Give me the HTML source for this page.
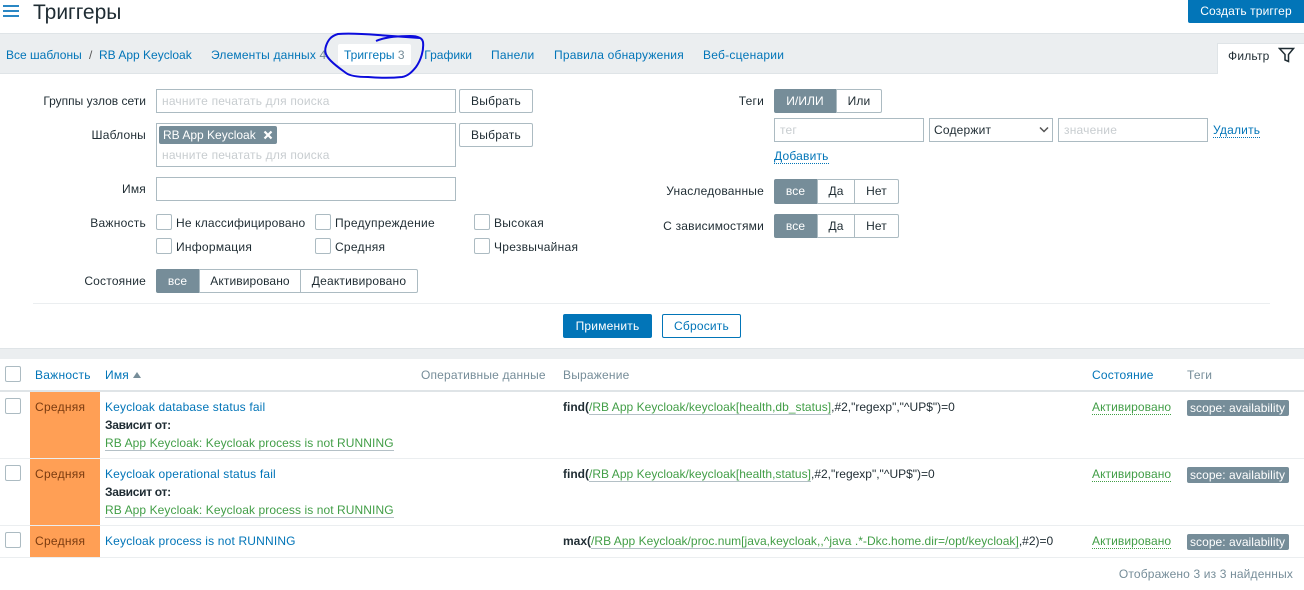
<!DOCTYPE html>
<html lang="ru"><head><meta charset="utf-8"><title>Триггеры</title>
<style>
html,body{margin:0;padding:0;background:#fff}
body{width:1304px;height:590px;overflow:hidden;position:relative;font:12px/14px "Liberation Sans",Arial,sans-serif;color:#1f2c33;letter-spacing:.2px}
.t{position:absolute;white-space:nowrap;line-height:14px}
.r{text-align:right}
.c{text-align:center}
.b{color:#0275b8}
.g{color:#429e47}
.m{color:#768d99}
.ph{color:#c8cdd0}
.l0{letter-spacing:0}
.ln17{letter-spacing:.17px}
.dep{letter-spacing:.08px}
.exp{letter-spacing:0}
.exp .g{letter-spacing:.03px}
.ck{letter-spacing:.27px}
.box{position:absolute;box-sizing:border-box;border:1px solid #acbbc2;background:#fff}
.btn{position:absolute;box-sizing:border-box;border:1px solid #acbbc2;background:#fff;border-radius:2px;text-align:center;line-height:22px}
.seg{position:absolute;box-sizing:border-box;border:1px solid #acbbc2;background:#fff;text-align:center;line-height:22px;margin:0;letter-spacing:.1px}
.on{background:#768d99;border-color:#768d99;color:#fff}
.cb{position:absolute;box-sizing:border-box;width:16px;height:16px;border:1px solid #acbbc2;border-radius:2px;background:#fff}
.f{position:absolute;background:#ebeef0}
.sev{position:absolute;left:30px;width:70px;background:#ff9f55;color:#7a3b10}
.tag{position:absolute;left:1187px;width:102px;height:16px;background:#768d99;color:#fff;border-radius:2px;line-height:16px;text-indent:3px;white-space:nowrap;overflow:hidden;letter-spacing:.05px}
.ln{position:absolute;left:0;width:1304px;height:1px;background:#ebeef0}
.u{border-bottom:1px solid #b4c0c6}
.d{border-bottom:1px dotted #429e47;letter-spacing:.08px}
.db{border-bottom:1px dotted #0275b8}
</style></head><body>

<div class="f" style="left:3px;top:5px;width:16px;height:2px;background:#2a87c4"></div>
<div class="f" style="left:3px;top:10px;width:16px;height:2px;background:#2a87c4"></div>
<div class="f" style="left:3px;top:15px;width:16px;height:2px;background:#2a87c4"></div>
<div class="t l0" style="left:33px;top:0;font-size:21px;line-height:25px">Триггеры</div>
<div class="btn" style="left:1188px;top:0;width:116px;height:23px;background:#0275b8;border-color:#0275b8;color:#fff;border-radius:0 0 0 2px;line-height:21px;letter-spacing:.13px">Создать триггер</div>

<div class="f" style="left:0;top:33px;width:1304px;height:41px;box-sizing:border-box;border-top:1px solid #dfe4e7;border-bottom:1px solid #dfe4e7"></div>
<div class="t b l0" style="left:6px;top:48px">Все шаблоны</div>
<div class="t" style="left:89px;top:48px;color:#555">/</div>
<div class="t b l0" style="left:99px;top:48px">RB App Keycloak</div>
<div class="t b ln17" style="left:211px;top:48px">Элементы данных <span class="m">4</span></div>
<div class="f" style="left:338px;top:44px;width:73px;height:21px;background:#fff;border-radius:2px"></div>
<div class="t b l0" style="left:344px;top:48px">Триггеры <span class="m">3</span></div>
<div class="t b l0" style="left:425px;top:48px;width:47px;overflow:hidden;direction:rtl">Графики</div>
<div class="t b l0" style="left:491px;top:48px;letter-spacing:.25px">Панели</div>
<div class="t b" style="left:554px;top:48px">Правила обнаружения</div>
<div class="t b" style="left:703px;top:48px;letter-spacing:.25px">Веб-сценарии</div>
<div class="f" style="left:1217px;top:43px;width:87px;height:31px;background:#fff;box-sizing:border-box;border:1px solid #dfe4e7;border-bottom:0;border-right:0"></div>
<div class="t" style="left:1228px;top:49px">Фильтр</div>
<svg style="position:absolute;left:1278px;top:47px" width="17" height="16" viewBox="0 0 17 16"><path d="M1.5 1.5H15.5L10.5 7.5V14.5L7 13V7.5Z" fill="none" stroke="#1f2c33" stroke-width="1.5"/></svg>
<svg style="position:absolute;left:320px;top:28px" width="110" height="55" viewBox="320 28 110 55"><path d="M376 41C385 37 400 36 410 36C416 36 422 37 423 42C424 50 421 60 416 67C412 72 408 76 402 77C392 78 380 78 368 77C358 77 350 76 346 73C342 70 336 66 331 61C326 56 324 52 326 46C328 40 331 36 338 34C350 33 365 34 378 35C392 36 405 37 420 38" fill="none" stroke="#0c0cdc" stroke-width="2"/></svg>

<div class="t r l0" style="left:0;width:146px;top:94px">Группы узлов сети</div>
<div class="box" style="left:156px;top:89px;width:300px;height:24px"></div>
<div class="t ph" style="left:162px;top:94px">начните печатать для поиска</div>
<div class="btn" style="left:459px;top:89px;width:74px;height:24px;letter-spacing:.25px">Выбрать</div>

<div class="t r" style="left:0;width:146px;top:128px">Шаблоны</div>
<div class="box" style="left:156px;top:123px;width:300px;height:44px"></div>
<div class="f" style="left:159px;top:126px;width:118px;height:18px;background:#768d99;border-radius:2px"></div>
<div class="t l0" style="left:163px;top:128px;color:#fff">RB App Keycloak</div>
<svg style="position:absolute;left:263px;top:130px" width="10" height="10" viewBox="0 0 10 10"><path d="M1.5 1.5L8.5 8.5M8.5 1.5L1.5 8.5" stroke="#fff" stroke-width="2.2"/></svg>
<div class="t ph" style="left:162px;top:148px">начните печатать для поиска</div>
<div class="btn" style="left:459px;top:123px;width:74px;height:24px;letter-spacing:.25px">Выбрать</div>

<div class="t r" style="left:0;width:146px;top:182px">Имя</div>
<div class="box" style="left:156px;top:177px;width:300px;height:24px"></div>

<div class="t r" style="left:0;width:146px;top:216px;letter-spacing:.25px">Важность</div>
<div class="cb" style="left:156px;top:214px"></div><div class="t ln17" style="left:176px;top:216px">Не классифицировано</div>
<div class="cb" style="left:315px;top:214px"></div><div class="t ck" style="left:335px;top:216px">Предупреждение</div>
<div class="cb" style="left:474px;top:214px"></div><div class="t ck" style="left:494px;top:216px">Высокая</div>
<div class="cb" style="left:156px;top:238px"></div><div class="t ck" style="left:176px;top:240px">Информация</div>
<div class="cb" style="left:315px;top:238px"></div><div class="t ck" style="left:335px;top:240px">Средняя</div>
<div class="cb" style="left:474px;top:238px"></div><div class="t ck" style="left:494px;top:240px">Чрезвычайная</div>

<div class="t r" style="left:0;width:146px;top:274px">Состояние</div>
<div class="seg on" style="left:156px;top:269px;width:43px;height:24px;border-radius:2px 0 0 2px">все</div>
<div class="seg" style="left:199px;top:269px;width:102px;height:24px">Активировано</div>
<div class="seg" style="left:300px;top:269px;width:118px;height:24px;border-radius:0 2px 2px 0;letter-spacing:.2px">Деактивировано</div>

<div class="t r" style="left:600px;width:164px;top:94px">Теги</div>
<div class="seg on" style="left:774px;top:89px;width:62px;height:24px;border-radius:2px 0 0 2px">И/ИЛИ</div>
<div class="seg" style="left:836px;top:89px;width:46px;height:24px;border-radius:0 2px 2px 0">Или</div>
<div class="box" style="left:774px;top:118px;width:150px;height:24px"></div>
<div class="t ph" style="left:780px;top:123px">тег</div>
<div class="box" style="left:929px;top:118px;width:124px;height:24px"></div>
<div class="t" style="left:934px;top:123px">Содержит</div>
<svg style="position:absolute;left:1039px;top:126px" width="10" height="8" viewBox="0 0 10 8"><path d="M1 1.5L5 5.5L9 1.5" fill="none" stroke="#555" stroke-width="1.5"/></svg>
<div class="box" style="left:1058px;top:118px;width:150px;height:24px"></div>
<div class="t ph" style="left:1064px;top:123px">значение</div>
<div class="t b db" style="left:1213px;top:123px">Удалить</div>
<div class="t b db" style="left:774px;top:149px">Добавить</div>

<div class="t r" style="left:600px;width:164px;top:184px">Унаследованные</div>
<div class="seg on" style="left:774px;top:179px;width:43px;height:25px;border-radius:2px 0 0 2px">все</div>
<div class="seg" style="left:817px;top:179px;width:38px;height:25px">Да</div>
<div class="seg" style="left:854px;top:179px;width:45px;height:25px;border-radius:0 2px 2px 0">Нет</div>
<div class="t r" style="left:600px;width:164px;top:219px">С зависимостями</div>
<div class="seg on" style="left:774px;top:214px;width:43px;height:24px;border-radius:2px 0 0 2px">все</div>
<div class="seg" style="left:817px;top:214px;width:38px;height:24px">Да</div>
<div class="seg" style="left:854px;top:214px;width:45px;height:24px;border-radius:0 2px 2px 0">Нет</div>

<div class="f" style="left:33px;top:303px;width:1237px;height:1px"></div>
<div class="btn" style="left:563px;top:314px;width:89px;height:24px;background:#0275b8;border-color:#0275b8;color:#fff">Применить</div>
<div class="btn b" style="left:662px;top:314px;width:79px;height:24px;border-color:#0275b8">Сбросить</div>

<div class="f" style="left:0;top:348px;width:1304px;height:11px;border-top:1px solid #dfe4e7;box-sizing:border-box"></div>

<div class="cb" style="left:5px;top:366px"></div>
<div class="t b" style="left:35px;top:368px;letter-spacing:.25px">Важность</div>
<div class="t b" style="left:105px;top:368px">Имя</div>
<svg style="position:absolute;left:133px;top:372px" width="8" height="6" viewBox="0 0 8 6"><path d="M0 6L4 0L8 6Z" fill="#768d99"/></svg>
<div class="t m ln17" style="left:421px;top:368px">Оперативные данные</div>
<div class="t m" style="left:563px;top:368px">Выражение</div>
<div class="t b" style="left:1092px;top:368px">Состояние</div>
<div class="t m" style="left:1187px;top:368px">Теги</div>
<div class="f" style="left:0;top:390px;width:1304px;height:2px;background:#dfe4e7"></div>

<div class="sev" style="top:392px;height:66px"></div>
<div class="sev" style="top:459px;height:66px"></div>
<div class="sev" style="top:526px;height:31px"></div>
<div class="ln" style="top:458px"></div>
<div class="ln" style="top:525px"></div>
<div class="ln" style="top:557px"></div>

<div class="cb" style="left:5px;top:398px"></div>
<div class="t" style="left:35px;top:400px;color:#7a3b10;letter-spacing:.28px">Средняя</div>
<div class="t b ln17" style="left:105px;top:400px">Keycloak database status fail</div>
<div class="t" style="left:105px;top:418px;font-weight:bold;letter-spacing:-.3px">Зависит от:</div>
<div class="t g u dep" style="left:105px;top:436px">RB App Keycloak: Keycloak process is not RUNNING</div>
<div class="t exp" style="left:563px;top:400px"><b>find(</b><span class="g u">/RB App Keycloak/keycloak[health,db_status]</span>,#2,"regexp","^UP$")=0</div>
<div class="t g d" style="left:1092px;top:400px">Активировано</div>
<div class="tag" style="top:400px">scope: availability</div>

<div class="cb" style="left:5px;top:465px"></div>
<div class="t" style="left:35px;top:467px;color:#7a3b10;letter-spacing:.28px">Средняя</div>
<div class="t b ln17" style="left:105px;top:467px">Keycloak operational status fail</div>
<div class="t" style="left:105px;top:485px;font-weight:bold;letter-spacing:-.3px">Зависит от:</div>
<div class="t g u dep" style="left:105px;top:503px">RB App Keycloak: Keycloak process is not RUNNING</div>
<div class="t exp" style="left:563px;top:467px"><b>find(</b><span class="g u">/RB App Keycloak/keycloak[health,status]</span>,#2,"regexp","^UP$")=0</div>
<div class="t g d" style="left:1092px;top:467px">Активировано</div>
<div class="tag" style="top:467px">scope: availability</div>

<div class="cb" style="left:5px;top:532px"></div>
<div class="t" style="left:35px;top:534px;color:#7a3b10;letter-spacing:.28px">Средняя</div>
<div class="t b ln17" style="left:105px;top:534px">Keycloak process is not RUNNING</div>
<div class="t exp" style="left:563px;top:534px"><b>max(</b><span class="g u">/RB App Keycloak/proc.num[java,keycloak,,^java .*-Dkc.home.dir=/opt/keycloak]</span>,#2)=0</div>
<div class="t g d" style="left:1092px;top:534px">Активировано</div>
<div class="tag" style="top:534px">scope: availability</div>

<div class="t r m" style="left:900px;width:393px;top:567px;letter-spacing:.15px">Отображено 3 из 3 найденных</div>
</body></html>
